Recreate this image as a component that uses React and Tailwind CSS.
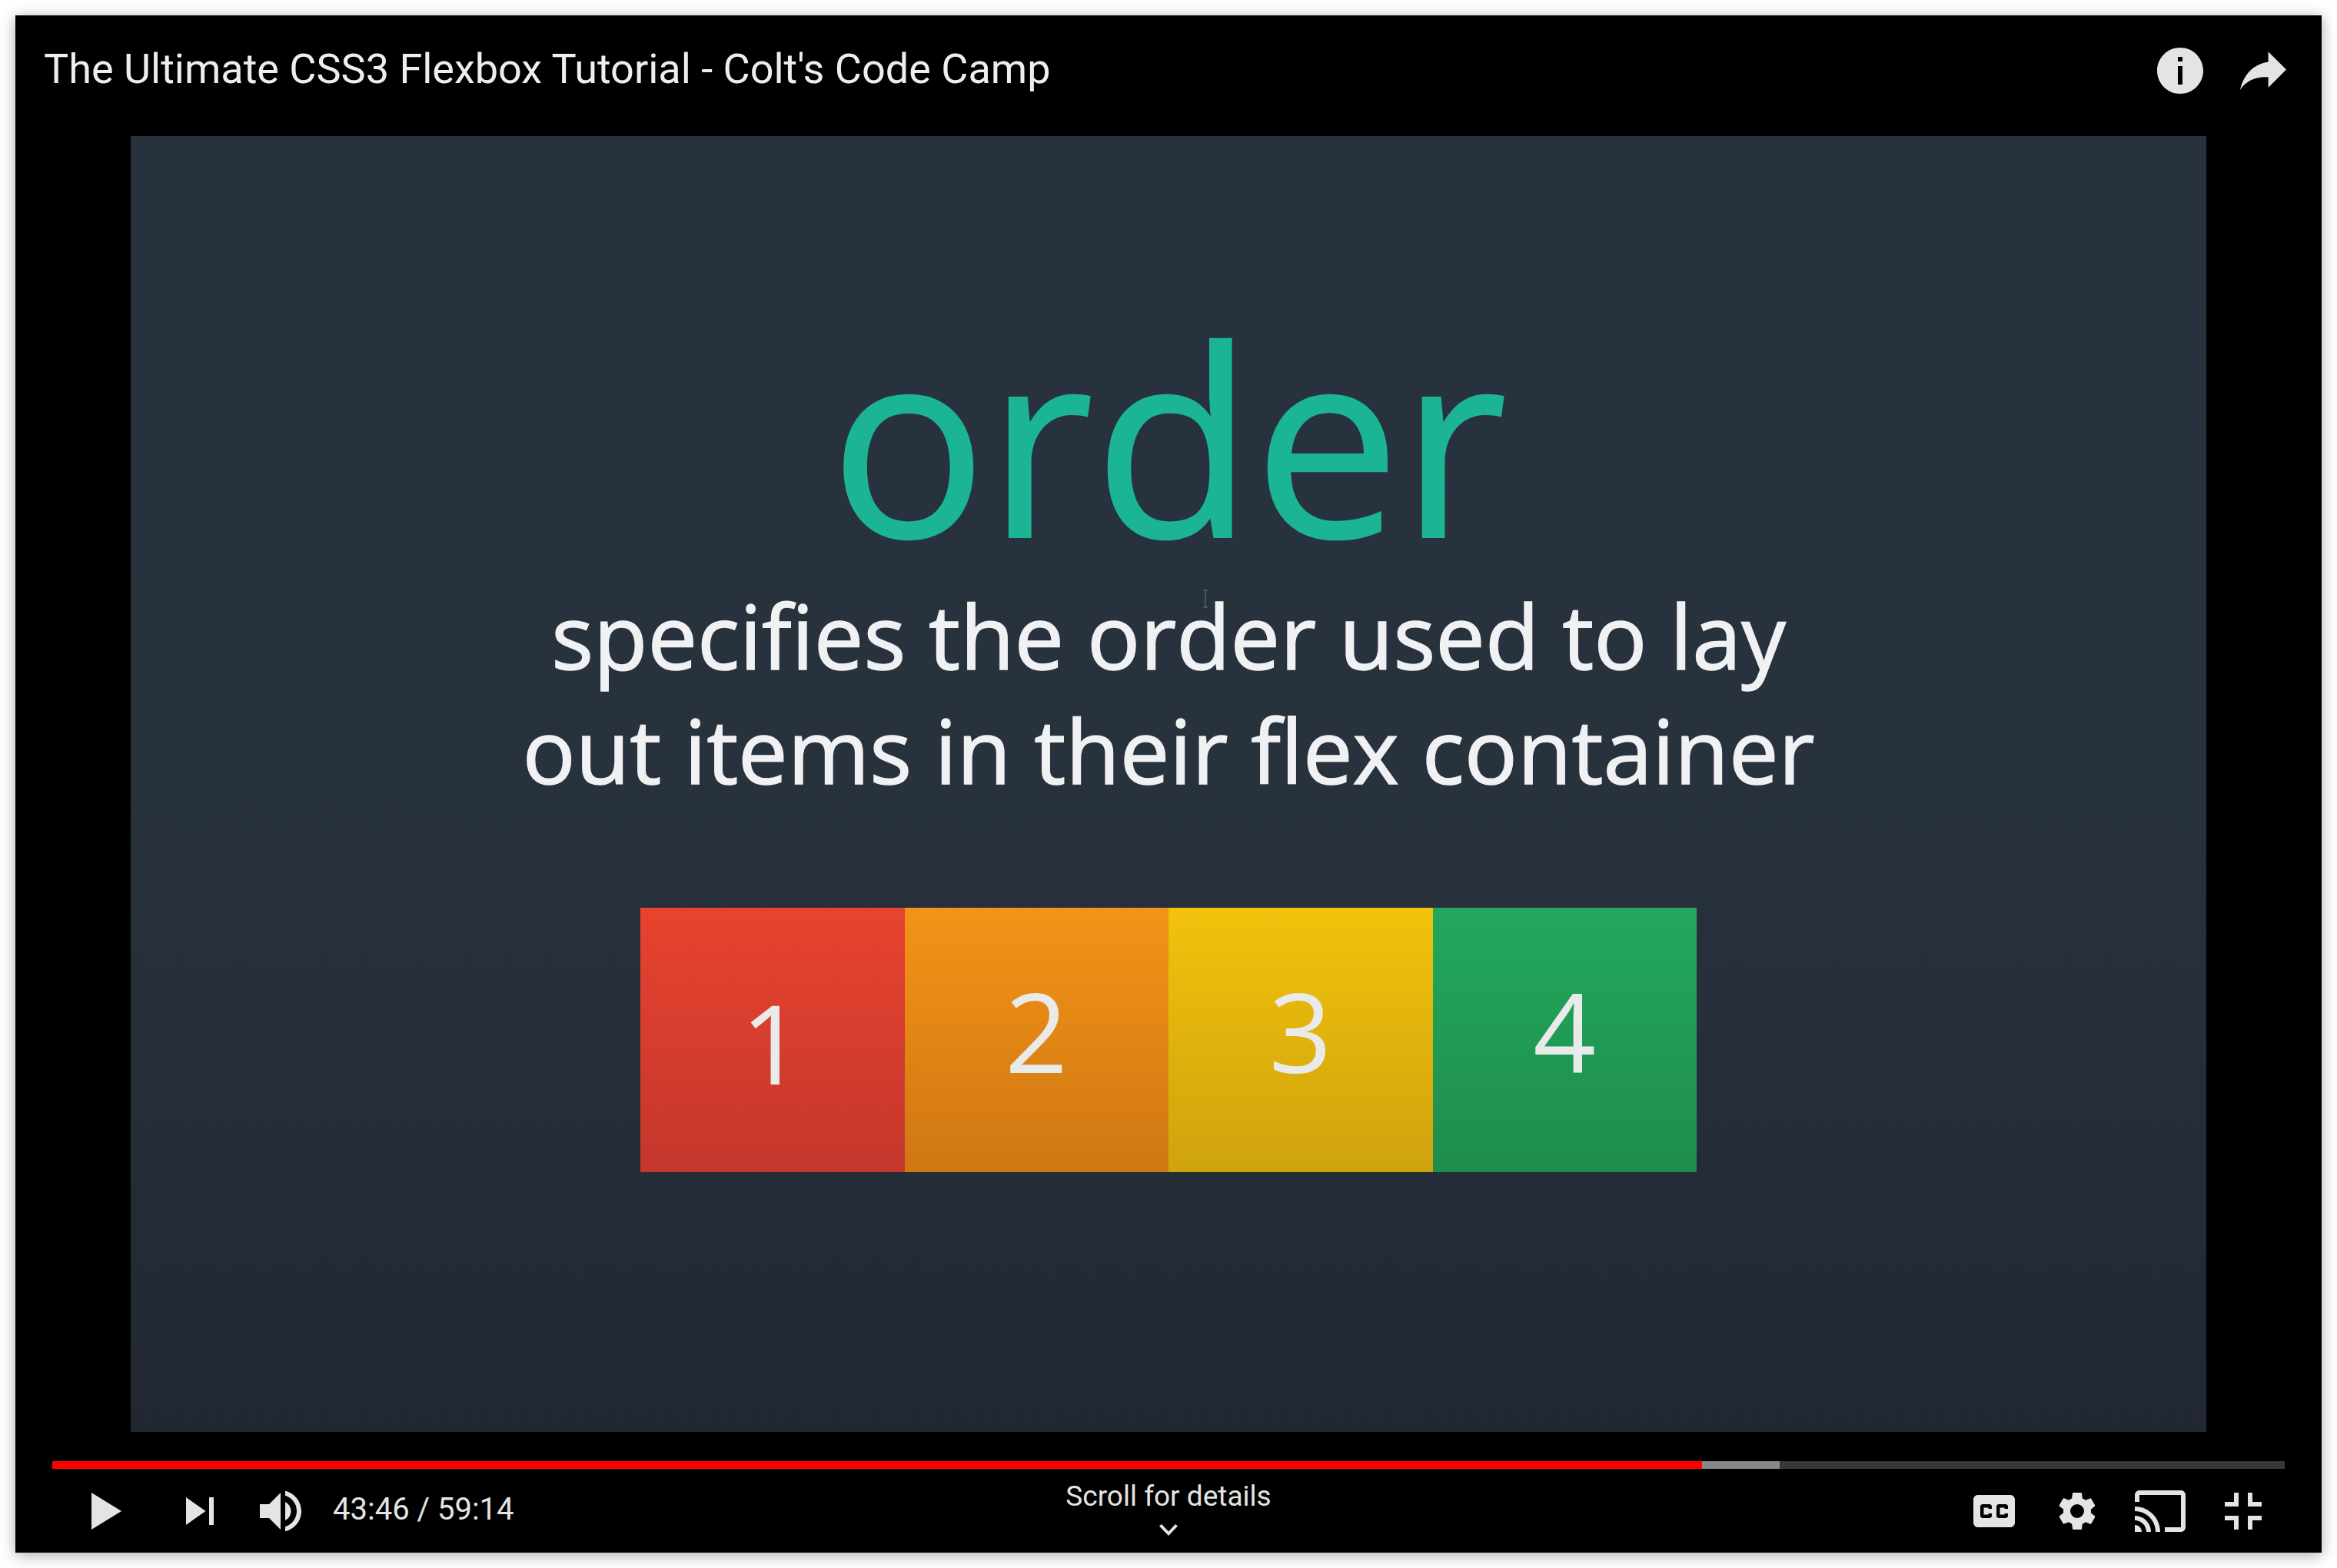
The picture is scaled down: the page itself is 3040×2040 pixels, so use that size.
const I = ({ children }) => (
  <svg viewBox="0 0 36 36" className="w-[108px] h-[108px] shrink-0" fill="#e4e4e4">{children}</svg>
);

const Box = ({ className, children, digit }) => (
  <div className={`w-[343.5px] h-full flex justify-center items-center text-[#e9eaea] text-[143px] leading-none ${className}`}>
    <span className={digit}>{children}</span>
  </div>
);

export default function App() {
  return (
    <div className="w-[3040px] h-[2040px] bg-white p-[20px]">
      <div className="w-[3000px] h-[2000px] bg-black flex flex-col shadow-[0_3px_18px_rgba(0,0,0,0.35)]">
        <div className="h-[157px] flex items-start justify-between pt-[18px] pl-[37px] pr-[22px] shrink-0">
          <div className="text-[54px] leading-[64px] text-[#eeeeee] font-['Roboto',sans-serif] mt-[20px] whitespace-nowrap">
            The Ultimate CSS3 Flexbox Tutorial - Colt's Code Camp
          </div>
          <div className="flex">
            <I>
              <path d="M18,8 C12.47,8 8,12.47 8,18 C8,23.52 12.47,28 18,28 C23.52,28 28,23.52 28,18 C28,12.47 23.52,8 18,8 Z M17,16 L19,16 L19,24 L17,24 L17,16 Z M17,12 L19,12 L19,14 L17,14 L17,12 Z" fillRule="evenodd" />
            </I>
            <I>
              <path d="M20.2,14.19 V9.74 L28,17.53 L20.2,25.32 V20.76 C15.3,20.4 10.6,22.1 8,26.3 C9.4,20.3 13.2,15.2 20.2,14.19 Z" />
            </I>
          </div>
        </div>

        <div className="relative mx-[150px] h-[1686px] shrink-0 flex flex-col items-center bg-gradient-to-b from-[#28323e] via-[#28323d] to-[#212833] font-['Open_Sans',sans-serif]">
          <div className="absolute left-[1394px] top-[590px] w-[8px] h-[24px]">
            <svg viewBox="0 0 8 24" className="w-full h-full" fill="none" stroke="#566270" strokeWidth="1.5">
              <path d="M1 1h6M4 1v22M1 23h6" />
            </svg>
          </div>
          <div className="text-[340px] leading-[340px] text-[#1bb595] [-webkit-text-stroke:2px_#1bb595] mt-[221px] whitespace-nowrap">order</div>
          <div className="text-[115px] leading-[149px] text-[#f0f1f3] [-webkit-text-stroke:1.5px_#f0f1f3] text-center mt-[14px] whitespace-nowrap">
            <div>specifies the order used to lay</div>
            <div>out items in their flex container</div>
          </div>
          <div className="flex h-[344px] mt-[131px] w-[1374px]">
            <Box className="bg-gradient-to-b from-[#e8432f] to-[#c4372c]" digit="pt-[4px]">1</Box>
            <Box className="bg-gradient-to-b from-[#f39317] to-[#cf7713]" digit="pb-[26px]">2</Box>
            <Box className="bg-gradient-to-b from-[#f2c20c] to-[#cfa30d]" digit="pb-[26px]">3</Box>
            <Box className="bg-gradient-to-b from-[#22a85c] to-[#1f8d4d]" digit="pb-[26px]">4</Box>
          </div>
        </div>

        <div className="flex h-[10px] mt-[38px] mx-[48px] bg-[#383838] shrink-0">
          <div className="w-[2146px] bg-[#ff0000]" />
          <div className="w-[101px] bg-[#888888]" />
        </div>

        <div className="flex h-[108px] mt-[1px] px-[48px] items-start shrink-0 font-['Roboto',sans-serif] text-[#e4e4e4]">
          <div className="flex-1">
            <div className="flex items-start pl-[15px]">
              <I>
                <path d="M12,26 L18.5,22 L18.5,14 L12,10 Z M18.5,22 L25,18 L25,18 L18.5,14 Z" />
              </I>
              <div className="w-[15px]" />
              <I>
                <path d="M12,24 L20.5,18 L12,12 V24 Z M22,12 v12 h2 V12 h-2 Z" />
              </I>
              <I>
                <path d="M8,21 L12,21 L17,26 L17,10 L12,15 L8,15 L8,21 Z M19,14 L19,22 C20.48,21.32 21.5,19.77 21.5,18 C21.5,16.26 20.48,14.74 19,14 Z M19,11.29 C21.89,12.15 24,14.83 24,18 C24,21.17 21.89,23.85 19,24.71 L19,26.77 C23.01,25.86 26,22.28 26,18 C26,13.72 23.01,10.14 19,9.23 L19,11.29 Z" />
              </I>
              <div className="text-[40px] leading-[108px] ml-[11px] mt-[-2px] whitespace-nowrap">43:46 / 59:14</div>
            </div>
          </div>
          <div className="flex flex-col items-center">
            <div className="text-[37px] leading-[42px] mt-[14px] whitespace-nowrap">Scroll for details</div>
            <svg viewBox="0 0 24 16" className="w-[24px] h-[16px] mt-[14px]" fill="#e4e4e4">
              <path d="M3 1 L12 10.5 L21 1 L24 3.5 L12 16 L0 3.5 Z" />
            </svg>
          </div>
          <div className="flex-1 flex justify-end">
            <I>
              <path fillRule="evenodd" d="M11,11 C9.89,11 9,11.9 9,13 L9,23 C9,24.1 9.89,25 11,25 L25,25 C26.1,25 27,24.1 27,23 L27,13 C27,11.9 26.1,11 25,11 L11,11 Z M17,17 L15.5,17 L15.5,16.5 L13.5,16.5 L13.5,19.5 L15.5,19.5 L15.5,19 L17,19 L17,20 C17,20.55 16.55,21 16,21 L13,21 C12.45,21 12,20.55 12,20 L12,16 C12,15.45 12.45,15 13,15 L16,15 C16.55,15 17,15.45 17,16 L17,17 Z M24,17 L22.5,17 L22.5,16.5 L20.5,16.5 L20.5,19.5 L22.5,19.5 L22.5,19 L24,19 L24,20 C24,20.55 23.55,21 23,21 L20,21 C19.45,21 19,20.55 19,20 L19,16 C19,15.45 19.45,15 20,15 L23,15 C23.55,15 24,15.45 24,16 L24,17 Z" />
            </I>
            <I>
              <path fillRule="evenodd" d="M23.94,18.78 c.03,-.25 .05,-.51 .05,-.78 0,-.27 -.02,-.52 -.05,-.78 l1.68,-1.32 c.15,-.12 .19,-.33 .09,-.51 l-1.6,-2.76 c-.09,-.17 -.31,-.24 -.48,-.17 l-1.99,.8 c-.41,-.32 -.86,-.58 -1.35,-.78 L20,10.34 C19.97,10.15 19.81,10 19.6,10 h-3.2 c-.2,0 -.37,.15 -.4,.34 L15.7,12.46 c-.49,.2 -.94,.46 -1.35,.78 l-1.99,-.8 c-.18,-.07 -.39,0 -.48,.17 l-1.6,2.76 c-.1,.18 -.06,.39 .09,.51 l1.68,1.32 c-.03,.26 -.05,.52 -.05,.78 0,.26 .02,.52 .05,.78 l-1.68,1.32 c-.15,.12 -.19,.33 -.09,.51 l1.6,2.76 c.09,.17 .31,.24 .48,.17 l1.99,-.8 c.41,.32 .86,.58 1.35,.78 L16,25.66 c.03,.19 .2,.34 .4,.34 h3.2 c.21,0 .37,-.15 .4,-.34 l.3,-2.12 c.49,-.2 .94,-.46 1.35,-.78 l1.99,.8 c.17,.07 .39,0 .48,-.17 l1.6,-2.76 c.1,-.18 .06,-.39 -.09,-.51 Z M18,15 a3,3 0 1 0 0,6 a3,3 0 1 0 0,-6 Z" />
            </I>
            <I>
              <path d="M27,9 L9,9 C7.9,9 7,9.9 7,11 L7,14 L9,14 L9,11 L27,11 L27,25 L20,25 L20,27 L27,27 C28.1,27 29,26.1 29,25 L29,11 C29,9.9 28.1,9 27,9 Z" />
              <path d="M7,24 L7,27 L10,27 C10,25.34 8.66,24 7,24 Z" />
              <path d="M7,20 L7,22 C9.76,22 12,24.24 12,27 L14,27 C14,23.13 10.87,20 7,20 Z" />
              <path d="M7,16 L7,18 C11.97,18 16,22.03 16,27 L18,27 C18,20.92 13.07,16 7,16 Z" />
            </I>
            <I>
              <path d="M14,14 h-4 v2 h6 v-6 h-2 Z M22,14 v-4 h-2 v6 h6 v-2 Z M20,26 h2 v-4 h4 v-2 h-6 Z M10,22 h4 v4 h2 v-6 h-6 Z" />
            </I>
          </div>
        </div>
      </div>
    </div>
  );
}
